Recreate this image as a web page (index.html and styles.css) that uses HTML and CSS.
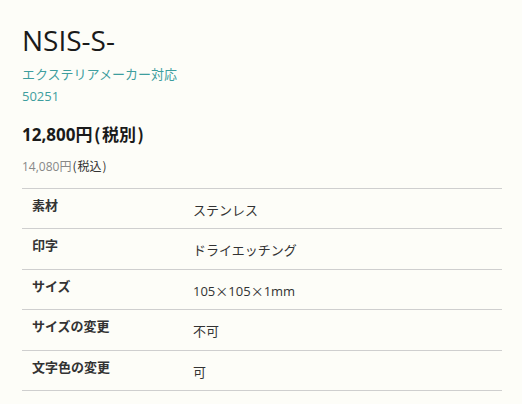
FILE: index.html
```html
<!DOCTYPE html>
<html lang="ja">
<head>
<meta charset="utf-8">
<link rel="stylesheet" href="styles.css">
</head>
<body>
<div class="product">
  <h1 class="title">NSIS-S-</h1>
  <p class="maker">エクステリアメーカー対応</p>
  <p class="code">50251</p>
  <p class="price"><span class="num">12,800円</span><span class="tax"><span class="paren">(</span>税別<span class="paren">)</span></span></p>
  <p class="price-tax"><span class="num">14,080円</span><span class="tax"><span class="paren">(</span>税込<span class="paren">)</span></span></p>
  <table class="spec">
    <tr><th>素材</th><td>ステンレス</td></tr>
    <tr><th>印字</th><td>ドライエッチング</td></tr>
    <tr><th>サイズ</th><td>105<span class="cjk">×</span>105<span class="cjk">×</span>1mm</td></tr>
    <tr><th>サイズの変更</th><td>不可</td></tr>
    <tr><th>文字色の変更</th><td>可</td></tr>
  </table>
</div>
</body>
</html>
```

FILE: styles.css
```css
html, body {
  margin: 0;
  padding: 0;
  background: #fdfdf8;
}
body {
  font-family: "Open Sans", "Noto Sans CJK JP", sans-serif;
  color: #222;
}
.product {
  padding: 20px 20px 0 22px;
}
.title {
  margin: 0;
  font-size: 28px;
  font-weight: 400;
  line-height: 40px;
  color: #1a1a1a;
}
.maker, .code {
  margin: 0;
  font-size: 13px;
  line-height: 22px;
  color: #3e9e9e;
}
.maker { margin-top: 3px; }
.price {
  margin: 14px 0 0;
  font-size: 17px;
  font-weight: 700;
  line-height: 26px;
  color: #1a1a1a;
}
.price-tax {
  margin: 8px 0 0;
  font-size: 12px;
  line-height: 20px;
  color: #333;
}
.price-tax .num { color: #888; }
.paren {
  font-family: "Noto Sans CJK JP", sans-serif;
  margin: 0 1.5px;
}
.price-tax .paren { margin: 0 1px; }
.cjk {
  font-family: "Noto Sans CJK JP", sans-serif;
}
.spec {
  margin-top: 11px;
  width: 480px;
  border-collapse: collapse;
  border-top: 1px solid #cfcfcf;
  font-size: 13px;
  color: #333;
}
.spec tr { border-bottom: 1px solid #cfcfcf; }
.spec th, .spec td {
  vertical-align: top;
  line-height: 20px;
  text-align: left;
  padding: 0 10px;
}
.spec th {
  width: 141px;
  font-weight: 700;
  padding-top: 6px;
  padding-bottom: 12px;
}
.spec td {
  padding-top: 11px;
  padding-bottom: 8.4px;
}
```
